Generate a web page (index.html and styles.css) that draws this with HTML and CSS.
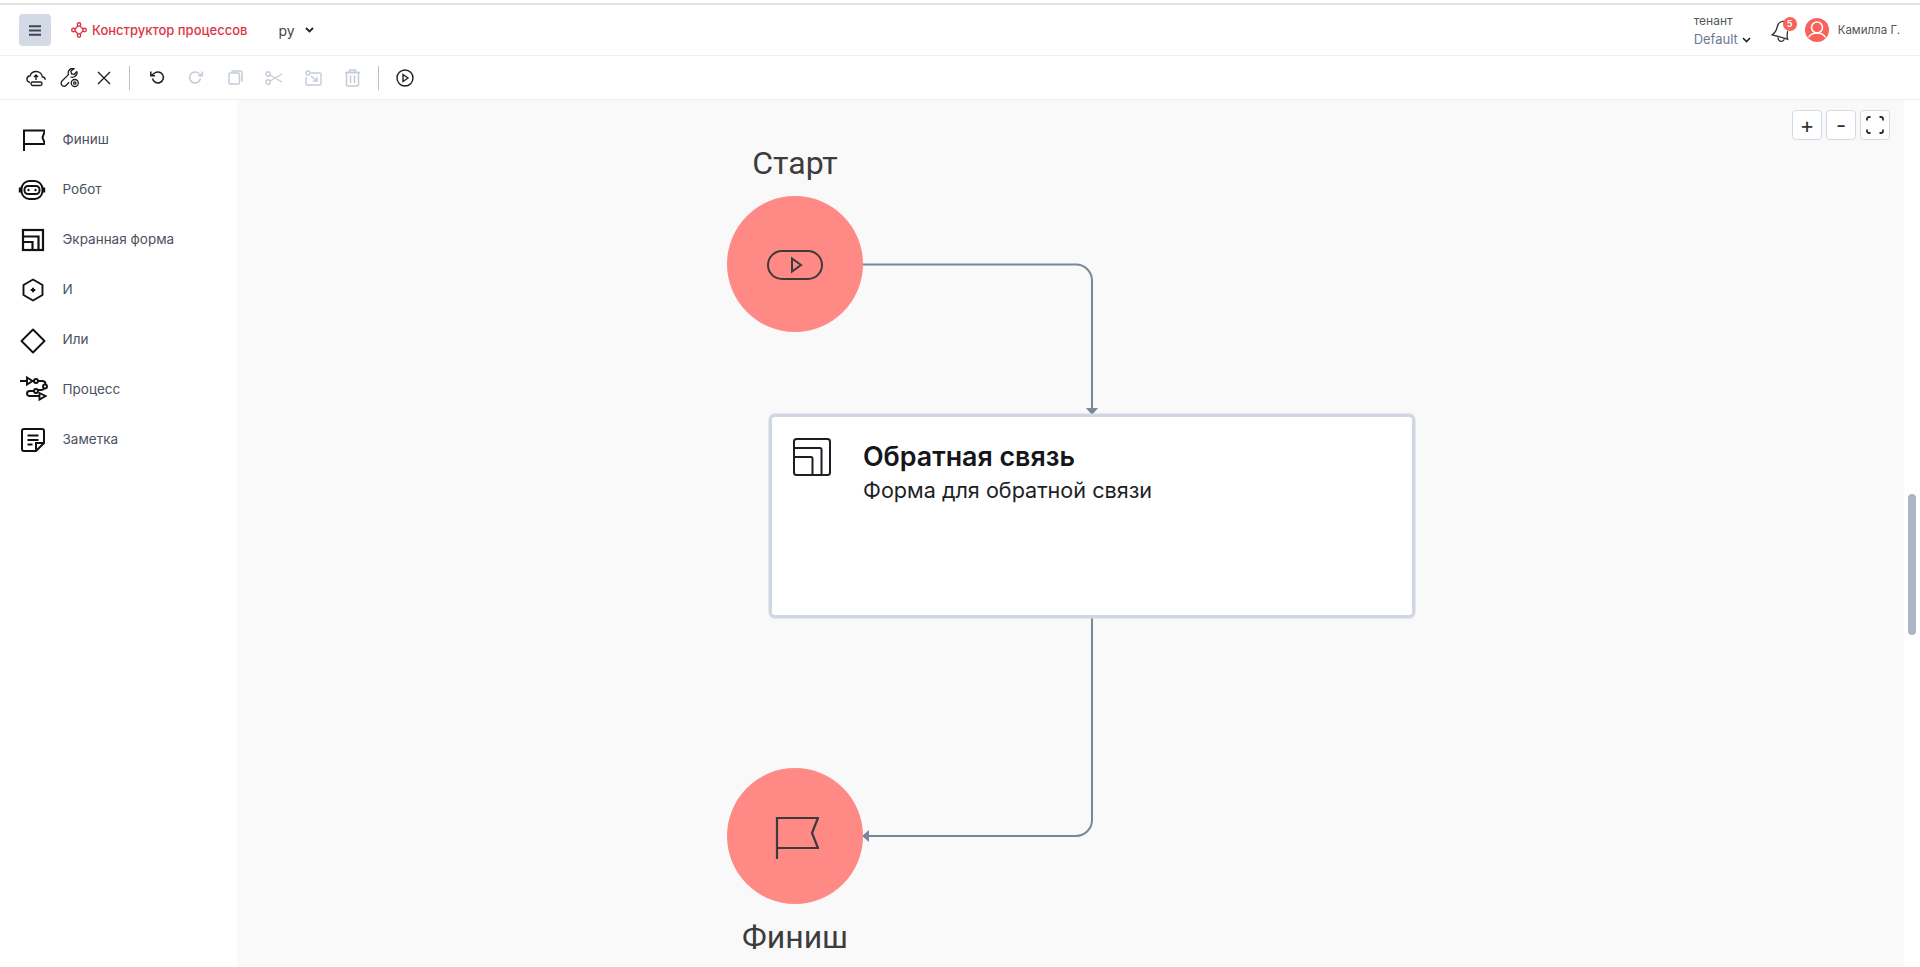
FILE: index.html
```html
<!DOCTYPE html>
<html lang="ru">
<head>
<meta charset="utf-8">
<title>Конструктор процессов</title>
<link rel="stylesheet" href="styles.css">
</head>
<body>
<div class="app">
  <header class="header">
    <button class="menu-btn" aria-label="menu">
      <svg width="12" height="11" viewBox="0 0 12 11"><path d="M0 1.2h12M0 5.500h12M0 9.800h12" stroke="#3d4654" stroke-width="2" fill="none"/></svg>
    </button>
    <div class="logo">
      <svg width="16" height="16" viewBox="0 0 16 16" fill="none" stroke="#dc3545" stroke-width="1.400"><path d="M8 3 L13 8 L8 13 L3 8 Z"/><circle cx="8" cy="2.400" r="1.700" fill="#fff"/><circle cx="13.600" cy="8" r="1.700" fill="#fff"/><circle cx="8" cy="13.600" r="1.700" fill="#fff"/><circle cx="2.400" cy="8" r="1.700" fill="#fff"/></svg>
      <span class="logo-text">Конструктор процессов</span>
    </div>
    <div class="lang">
      <span>ру</span>
      <svg width="9" height="6" viewBox="0 0 9 6"><path d="M1 1l3.500 3.500L8 1" stroke="#222" stroke-width="1.800" fill="none"/></svg>
    </div>
    <div class="header-right">
      <div class="tenant">
        <div class="tenant-label">тенант</div>
        <div class="tenant-value">Default
          <svg width="9" height="6" viewBox="0 0 9 6"><path d="M1 1l3.500 3.500L8 1" stroke="#222" stroke-width="1.600" fill="none"/></svg>
        </div>
      </div>
      <div class="bell">
        <svg width="22" height="24" viewBox="0 0 22 24" fill="none" stroke="#333" stroke-width="1.300"><path d="M13 2.500C9 2 7 4.500 6.200 8c-.7 3.200-2 5.800-5 7.800l15.500 4.400c-1-3-.6-5.700 0-8"/><path d="M7 18.500c0 2 1.200 3.500 3 3.800 1.600.2 2.800-.6 3.300-2"/></svg>
        <span class="badge">5</span>
      </div>
      <svg class="avatar" width="24" height="24" viewBox="0 0 24 24"><circle cx="12" cy="12" r="12" fill="#f9615b"/><circle cx="12" cy="9.500" r="5.500" fill="none" stroke="#fff" stroke-width="1.500"/><path d="M3.500 19.500c2-3.500 5-4.500 8.500-4.500s6.500 1 8.500 4.500" fill="none" stroke="#fff" stroke-width="1.500"/></svg>
      <span class="user-name">Камилла Г.</span>
    </div>
  </header>

  <nav class="toolbar">
    <span class="tool"><svg width="20" height="20" viewBox="0 0 20 20" fill="none" stroke="#1f1f1f" stroke-width="1.400"><path d="M4 14.500C1.800 14 .8 12.400 1 10.700c.2-1.700 1.500-2.900 3.200-3C5 5 7.300 3.500 10 3.500c3.400 0 6 2.300 6.300 5.300 1.800.3 2.900 1.500 2.900 3"/><path d="M10 12V7M8 9l2-2 2 2"/><rect x="5" y="14" width="11" height="3.500" rx="1.700"/></svg></span>
    <span class="tool"><svg width="20" height="20" viewBox="0 0 20 20" fill="none" stroke="#1f1f1f" stroke-width="1.300"><path d="M17 3.500l-3 3-2.500-.8-.7-2.500 3-2.500C11 0 8 1.800 8.200 5c0 .7.200 1.200.3 1.600L2 13c-1.300 1.400-1 3.500.2 4.500 1.200 1 2.800 1 4-.2l3-3"/><path d="M10.500 9c3 1 7-1 6.500-5.500"/><circle cx="14.800" cy="15" r="3.500"/><circle cx="14.800" cy="15" r="1.200"/></svg></span>
    <span class="tool"><svg width="14" height="14" viewBox="0 0 14 14"><path d="M1 1l12 12M13 1L1 13" stroke="#1f1f1f" stroke-width="1.400" fill="none"/></svg></span>
    <span class="sep sep-first"></span>
    <span class="tool tool-wide"><svg width="16" height="16" viewBox="0 0 16 16" fill="none" stroke="#1f1f1f" stroke-width="1.500"><path d="M3.500 8.500A5.500 5.500 0 1 0 5 3.500L2 5.500"/><path d="M1.800 1.500v4.200H6"/></svg></span>
    <span class="tool tool-wide"><svg width="16" height="16" viewBox="0 0 16 16" fill="none" stroke="#c3ccd9" stroke-width="1.500"><path d="M12.500 8.500A5.500 5.500 0 1 1 11 3.500l3 2"/><path d="M14.200 1.500v4.200H10"/></svg></span>
    <span class="tool tool-wide"><svg width="15" height="15" viewBox="0 0 15 15" fill="none" stroke="#c3ccd9" stroke-width="1.500"><rect x="1" y="3" width="10.500" height="11" rx="1.500"/><path d="M3.500 1h9a1.500 1.500 0 0 1 1.500 1.500v9"/></svg></span>
    <span class="tool tool-wide"><svg width="18" height="14" viewBox="0 0 18 14" fill="none" stroke="#c3ccd9" stroke-width="1.400"><circle cx="3" cy="3" r="2.200"/><circle cx="3" cy="11" r="2.200"/><path d="M5 4l12 7M5 10L17 3"/></svg></span>
    <span class="tool tool-wide"><svg width="17" height="16" viewBox="0 0 17 16" fill="none" stroke="#c3ccd9" stroke-width="1.400"><path d="M6 3h9a1 1 0 0 1 1 1v10a1 1 0 0 1-1 1H2a1 1 0 0 1-1-1V7"/><circle cx="3" cy="3" r="2"/><path d="M6 6l6 5M12 7v4H8"/></svg></span>
    <span class="tool tool-wide"><svg width="15" height="18" viewBox="0 0 15 18" fill="none" stroke="#c3ccd9" stroke-width="1.500"><path d="M0 3.500h15M4.500 3V1h6v2"/><rect x="1.500" y="3.500" width="12" height="13.500" rx="1"/><path d="M5.500 6.500v7.500M9.500 6.500v7.500"/></svg></span>
    <span class="sep sep-second"></span>
    <span class="tool"><svg width="18" height="18" viewBox="0 0 18 18" fill="none" stroke="#1f1f1f" stroke-width="1.400"><circle cx="9" cy="9" r="8"/><path d="M7 5.500l5 3.500-5 3.500z"/></svg></span>
  </nav>

  <div class="workspace">
    <aside class="sidebar">
      <div class="item">
        <svg width="24" height="24" viewBox="0 0 24 24" fill="none" stroke="#111" stroke-width="2"><path d="M3 23V2.500h21l-2.500 7 2.500 6.500H3"/></svg>
        <span>Финиш</span>
      </div>
      <div class="item">
        <svg class="robot-icon" width="28" height="24" viewBox="0 0 28 24" fill="none" stroke="#111" stroke-width="2"><rect x="3.500" y="3" width="21" height="18" rx="8"/><rect x="6.500" y="8" width="15" height="8" rx="3.500"/><circle cx="10.500" cy="12" r="1.200" fill="#111" stroke="none"/><circle cx="17.500" cy="12" r="1.200" fill="#111" stroke="none"/><path d="M2 9.500v5M26 9.500v5" stroke-width="2.400"/></svg>
        <span>Робот</span>
      </div>
      <div class="item">
        <svg width="24" height="24" viewBox="0 0 24 24" fill="none" stroke="#111" stroke-width="2.200"><rect x="2" y="2" width="20" height="20"/><path d="M2 8.500h15.500V22M2 14h9.500v8"/></svg>
        <span>Экранная форма</span>
      </div>
      <div class="item">
        <svg width="24" height="24" viewBox="0 0 24 24" fill="none" stroke="#111" stroke-width="1.900"><path d="M12 1.500l9.500 5.500v10L12 22.500 2.500 17V7z" stroke-linejoin="round"/><path d="M9.700 12h4.600M12 9.700v4.600"/></svg>
        <span>И</span>
      </div>
      <div class="item">
        <svg class="diamond-icon" width="26" height="26" viewBox="0 0 26 26" fill="none" stroke="#111" stroke-width="1.900"><path d="M13 1.500L24.500 13 13 24.500 1.500 13z" stroke-linejoin="round"/></svg>
        <span>Или</span>
      </div>
      <div class="item">
        <svg class="wide-icon" width="30" height="30" viewBox="0 0 30 30" fill="none" stroke="#111" stroke-width="1.900"><path d="M1 6h7M8 2.500l5.500 3.500L8 9.500zM14 6h1"/><circle cx="17" cy="6" r="2"/><path d="M19 6h4c2 0 3.500 1 3.500 3"/><circle cx="26" cy="11.500" r="2"/><path d="M25 13.500c-.5 1-1.500 1.500-3 1.500h-3"/><circle cx="17" cy="16" r="2"/><path d="M15 16h-4c-2 0-3 1-3 2.500s1 2.500 3 2.500h9"/><path d="M20.500 18l6 3-6 3.500z"/></svg>
        <span>Процесс</span>
      </div>
      <div class="item">
        <svg width="24" height="24" viewBox="0 0 24 24" fill="none" stroke="#111" stroke-width="2"><path d="M15 23H3a2 2 0 0 1-2-2V3a2 2 0 0 1 2-2h18a2 2 0 0 1 2 2v12z"/><path d="M15 23v-8h8M6.500 7.500h11M6.500 12h11M6.500 16.500h5"/></svg>
        <span>Заметка</span>
      </div>
    </aside>

    <main class="canvas">
      <svg class="edges" width="1667" height="867" viewBox="0 0 1667 867" fill="none">
        <path d="M625 164.500H839a16 16 0 0 1 16 16V308" stroke="#7a8699" stroke-width="2"/>
        <path d="M849 308h12l-6 7z" fill="#7a8699"/>
        <path d="M855 518V720a16 16 0 0 1-16 16H630" stroke="#7a8699" stroke-width="2"/>
        <path d="M632 730v12l-7-6z" fill="#7a8699"/>
      </svg>

      <div class="node-label label-start">Старт</div>
      <div class="circle circle-start">
        <svg width="56" height="30" viewBox="0 0 56 30" fill="none" stroke="#3b3b3b" stroke-width="2"><rect x="1" y="1" width="54" height="28" rx="14"/><path d="M25 8.500l9 6.500-9 6.500z"/></svg>
      </div>

      <div class="card">
        <svg class="card-icon" width="38" height="38" viewBox="0 0 38 38" fill="none" stroke="#1d1f24" stroke-width="2"><rect x="1" y="1" width="36" height="36" rx="2.500"/><path d="M1 10h26a1.500 1.500 0 0 1 1.500 1.500V37M1 19h17a1.500 1.500 0 0 1 1.500 1.500V37"/></svg>
        <div class="card-body">
          <div class="card-title">Обратная связь</div>
          <div class="card-sub">Форма для обратной связи</div>
        </div>
      </div>

      <div class="circle circle-finish">
        <svg width="44" height="44" viewBox="0 0 44 44" fill="none" stroke="#3b3b3b" stroke-width="2.200"><path d="M2 43V2h41l-6 15 6 15H2"/></svg>
      </div>
      <div class="node-label label-finish">Финиш</div>

      <div class="zoom-controls">
        <button class="zoom-btn">+</button>
        <button class="zoom-btn">-</button>
        <button class="zoom-btn">
          <svg width="18" height="18" viewBox="0 0 18 18" fill="none" stroke="#2a2a2a" stroke-width="1.800"><path d="M1 4.500V3a2 2 0 0 1 2-2h1.500M13.500 1H15a2 2 0 0 1 2 2v1.500M17 13.500V15a2 2 0 0 1-2 2h-1.500M4.500 17H3a2 2 0 0 1-2-2v-1.500"/></svg>
        </button>
      </div>
    </main>

    <div class="scroll-track"><div class="scroll-thumb"></div></div>
  </div>
</div>
</body>
</html>
```
FILE: styles.css
```css
* { box-sizing: border-box; }
html, body { margin: 0; height: 100%; overflow: hidden; background: #fff; }
body { font-family: Inter, "Noto Sans", sans-serif; color: #333; }

.app { height: 967px; display: flex; flex-direction: column; padding-top: 3px; }

.header {
  height: 53px;
  flex: none;
  display: flex;
  align-items: center;
  padding: 0 20px 0 19px;
  border-top: 2px solid #e2e2e2;
  border-bottom: 1px solid #f1f1f1;
}
.menu-btn {
  width: 32px; height: 32px;
  border: 0; border-radius: 4px; padding: 0;
  background: #d3dae5;
  display: flex; align-items: center; justify-content: center;
}
.logo { display: flex; align-items: center; gap: 5px; margin-left: 20px; }
.logo-text { font-size: 13px; font-weight: 500; color: #dc3545; white-space: nowrap; }
.lang { display: flex; align-items: center; gap: 10px; margin-left: 31px; font-size: 14px; color: #444; }

.header-right { margin-left: auto; display: flex; align-items: center; }
.tenant { width: 77px; font-size: 12px; line-height: 18px; margin-top: -1px; }
.tenant-label { color: #555; font-size: 12px; }
.tenant-value { color: #6b7a90; font-size: 13px; display: flex; align-items: center; gap: 4px; white-space: nowrap; }
.tenant-value svg { margin-top: 3px; }
.bell { position: relative; width: 22px; height: 24px; margin: 2px 12px 0 0; }
.bell svg { display: block; }
.badge {
  position: absolute; top: -2px; right: -4px;
  width: 14px; height: 14px; border-radius: 50%;
  background: #f9615b; color: #fff;
  font-size: 9px; font-weight: 600; line-height: 14px; text-align: center;
}
.avatar { flex: none; }
.user-name { margin-left: 9px; font-size: 11.5px; color: #555; white-space: nowrap; }

.toolbar {
  height: 44px;
  flex: none;
  display: flex;
  align-items: center;
  padding-left: 24px;
  border-bottom: 1px solid #f1f1f1;
}
.tool { width: 24px; height: 24px; margin-right: 10px; display: flex; align-items: center; justify-content: center; flex: none; }
.tool-wide { width: 24px; margin-right: 15px; }
.sep { width: 1px; height: 24px; background: #b5c0d0; flex: none; }
.sep-first { margin: 0 15px 0 3px; }
.sep-second { margin: 0 14px 0 -1px; }

.workspace { flex: 1; min-height: 0; display: flex; }
.sidebar { width: 237px; flex: none; padding-top: 14px; background: #fff; }
.item { height: 50px; display: flex; align-items: center; padding-left: 62.500px; position: relative; font-size: 13.500px; color: #4a5160; }
.item svg { position: absolute; left: 21px; top: 14px; }
.item svg.wide-icon { left: 19px; top: 11px; }
.item svg.robot-icon { left: 18px; }
.item svg.diamond-icon { left: 20px; }

.canvas { width: 1667px; flex: none; background: #f9f9f9; position: relative; overflow: hidden; }
.edges { position: absolute; left: 0; top: 0; }

.circle {
  position: absolute; width: 136px; height: 136px; border-radius: 50%;
  background: #ff8985;
  display: flex; align-items: center; justify-content: center;
}
.circle-start { left: 490px; top: 96px; }
.circle-start svg { margin-top: 2px; }
.circle-finish { left: 490px; top: 668px; }
.circle-finish svg { margin: 4px 0 0 3px; }

.node-label { position: absolute; width: 136px; left: 490px; text-align: center; font-family: Roboto, sans-serif; font-size: 32px; line-height: 36px; color: #3c3c3c; }
.label-start { top: 45px; }
.label-finish { top: 819px; }

.card {
  position: absolute; left: 532px; top: 314px; width: 646px; height: 204px;
  background: #fff; border: 3px solid #d0d7e2; border-radius: 6px;
  box-shadow: 0 0 0 1px rgba(208, 215, 226, .5);
  display: flex; padding: 21px 0 0 21px;
}
.card-icon { flex: none; }
.card-body { margin-left: 32px; }
.card-title { font-size: 26.800px; font-weight: 600; line-height: 30px; color: #14161a; margin-top: 3px; }
.card-sub { font-size: 21.600px; line-height: 28px; color: #1c1f26; margin-top: 5px; }

.zoom-controls { position: absolute; top: 10px; right: 14px; display: flex; gap: 4px; }
.zoom-btn {
  width: 30px; height: 30px; padding: 0;
  background: #fff; border: 1px solid #d3dae5; border-radius: 4px;
  font-family: Inter, sans-serif; font-size: 22px; line-height: 1; color: #333;
  display: flex; align-items: center; justify-content: center;
}

.scroll-track { flex: 1; position: relative; background: #fff; }
.scroll-thumb { position: absolute; left: 4px; top: 394px; width: 8px; height: 141px; border-radius: 4px; background: #abb5c6; }
```
